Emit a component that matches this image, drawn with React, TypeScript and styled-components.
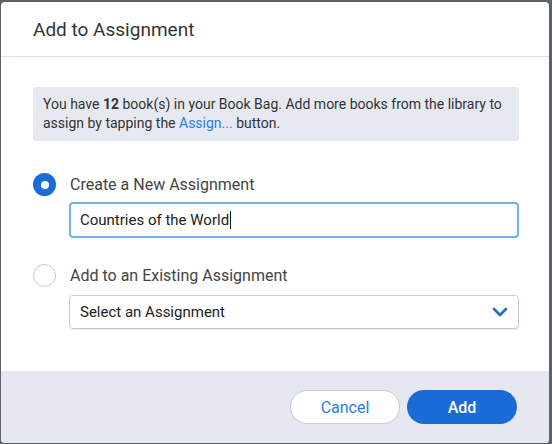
import React, { FC, useState } from 'react'
import styled, { createGlobalStyle } from 'styled-components'

const GlobalStyle = createGlobalStyle`
  html, body {
    margin: 0;
    padding: 0;
    background: #5d6168;
    font-family: Roboto, "Liberation Sans", Arial, sans-serif;
  }
  * {
    box-sizing: border-box;
  }
`

const Backdrop = styled.div`
  width: 552px;
  height: 444px;
  padding: 2px 3px 1px 1px;
  display: flex;
`

const Dialog = styled.div`
  flex: 1;
  display: flex;
  flex-direction: column;
  background: #fff;
  border-radius: 4px;
  overflow: hidden;
`

const Header = styled.div`
  height: 55px;
  padding: 0 32px;
  display: flex;
  align-items: center;
  font-size: 19px;
  color: #333;
  border-bottom: 1px solid #dcdfe6;
`

const Body = styled.div`
  flex: 1;
  padding: 30px 30px 0 32px;
  display: flex;
  flex-direction: column;
`

const Notice = styled.div`
  background: #e6e9f0;
  border-radius: 3px;
  padding: 8px 10px;
  font-size: 14px;
  line-height: 19px;
  color: #333;
`

const Link = styled.span`
  color: #2a7de1;
`

const Option = styled.div<{ $first?: boolean }>`
  display: flex;
  flex-direction: column;
  margin-top: ${(p) => (p.$first ? '32px' : '26px')};
`

const OptionRow = styled.label`
  display: flex;
  align-items: center;
  gap: 14px;
  cursor: pointer;
`

const Radio = styled.span<{ $checked?: boolean }>`
  width: 23px;
  height: 23px;
  border-radius: 50%;
  flex-shrink: 0;
  display: flex;
  align-items: center;
  justify-content: center;
  background: ${(p) => (p.$checked ? '#1a6dd7' : '#fff')};
  border: ${(p) => (p.$checked ? 'none' : '1px solid #c3c9d8')};

  &::after {
    content: '';
    width: 8px;
    height: 8px;
    border-radius: 50%;
    background: #fff;
    display: ${(p) => (p.$checked ? 'block' : 'none')};
  }
`

const OptionLabel = styled.span`
  font-size: 16px;
  color: #444;
`

const Field = styled.div<{ $focused?: boolean }>`
  margin: ${(p) => (p.$focused ? '6px' : '8px')} 0 0 36px;
  height: ${(p) => (p.$focused ? '36px' : '34px')};
  border-radius: 4px;
  border: ${(p) => (p.$focused ? '2px solid #6eb2ef' : '1px solid #c2c9d7')};
  box-shadow: ${(p) => (p.$focused ? 'none' : '0 1px 1px rgba(0,0,0,0.08)')};
  display: flex;
  align-items: center;
  padding: 0 ${(p) => (p.$focused ? '9px' : '10px')};
  font-size: 15px;
  color: #222;
`

const Caret = styled.span`
  display: inline-block;
  width: 1px;
  height: 18px;
  background: #111;
  margin-left: 1px;
`

const SelectText = styled.span`
  flex: 1;
`

const Footer = styled.div`
  height: 72px;
  background: #e5e8f0;
  display: flex;
  justify-content: flex-end;
  align-items: center;
  gap: 7px;
  padding: 0 32px 0 0;
`

const PillButton = styled.button<{ $primary?: boolean }>`
  width: 110px;
  height: 34px;
  border-radius: 17px;
  font-family: inherit;
  font-size: 16px;
  font-weight: ${(p) => (p.$primary ? 500 : 400)};
  color: ${(p) => (p.$primary ? '#fff' : '#2a7de1')};
  background: ${(p) => (p.$primary ? '#1a6bd6' : '#fff')};
  border: ${(p) => (p.$primary ? 'none' : '1px solid #c6ccd9')};
  cursor: pointer;
`

const Chevron: FC = () => (
  <svg width="16" height="10" viewBox="0 0 16 10">
    <path
      d="M2 2l6 6 6-6"
      fill="none"
      stroke="#1a6dd7"
      strokeWidth="2.6"
      strokeLinecap="round"
      strokeLinejoin="round"
    />
  </svg>
)

const App: FC = () => {
  const [mode, setMode] = useState<'new' | 'existing'>('new')

  return (
    <Backdrop>
      <GlobalStyle />
      <Dialog>
        <Header>Add to Assignment</Header>
        <Body>
          <Notice>
            You have <b>12</b> book(s) in your Book Bag. Add more books from the
            library to assign by tapping the <Link>Assign...</Link> button.
          </Notice>

          <Option $first>
            <OptionRow onClick={() => setMode('new')}>
              <Radio $checked={mode === 'new'} />
              <OptionLabel>Create a New Assignment</OptionLabel>
            </OptionRow>
            <Field $focused>
              Countries of the World
              <Caret />
            </Field>
          </Option>

          <Option>
            <OptionRow onClick={() => setMode('existing')}>
              <Radio $checked={mode === 'existing'} />
              <OptionLabel>Add to an Existing Assignment</OptionLabel>
            </OptionRow>
            <Field>
              <SelectText>Select an Assignment</SelectText>
              <Chevron />
            </Field>
          </Option>
        </Body>
        <Footer>
          <PillButton type="button">Cancel</PillButton>
          <PillButton type="button" $primary>
            Add
          </PillButton>
        </Footer>
      </Dialog>
    </Backdrop>
  )
}

export default App
